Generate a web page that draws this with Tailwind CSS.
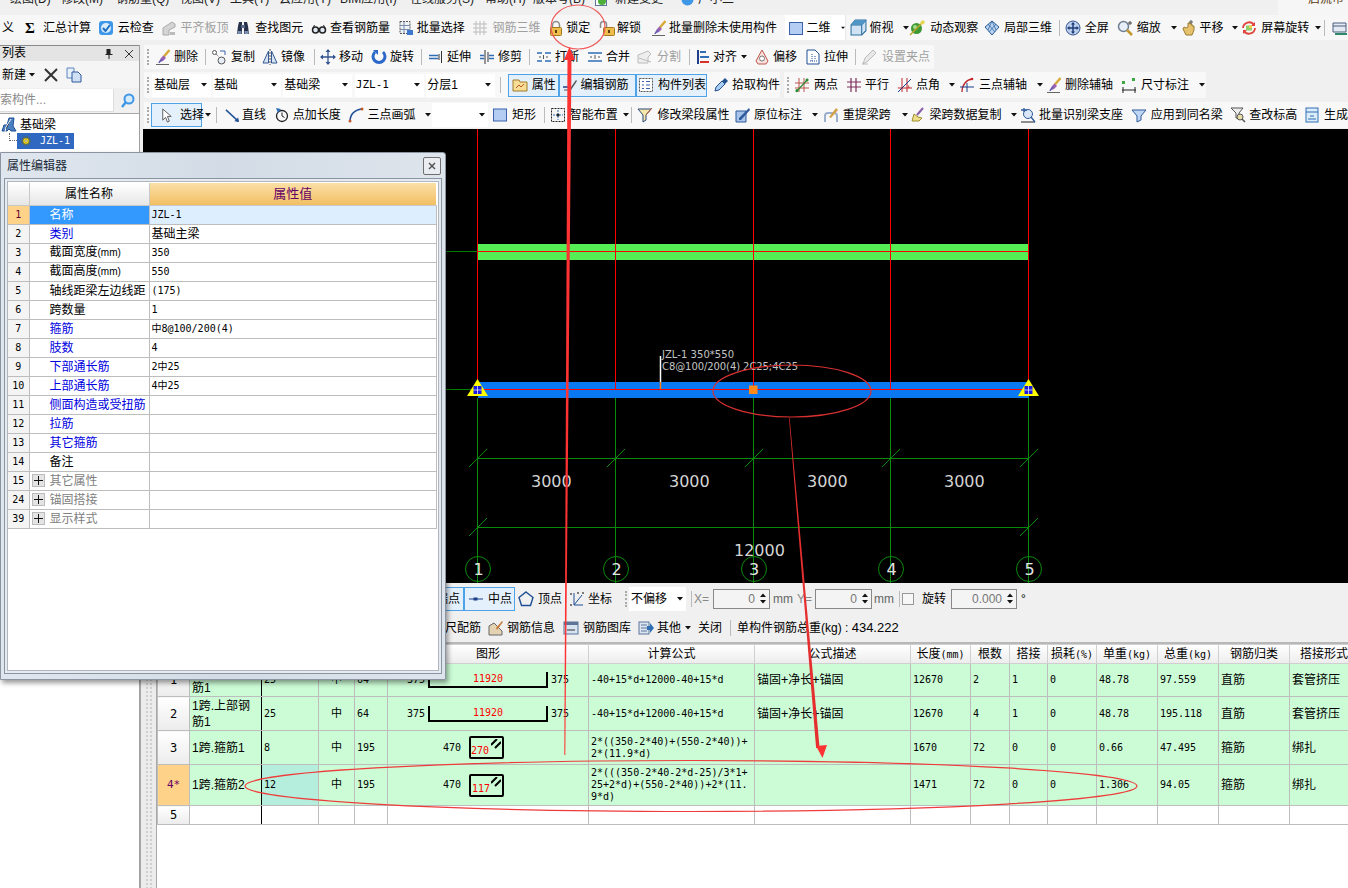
<!DOCTYPE html>
<html lang="zh-CN">
<head>
  <meta charset="UTF-8" />
  <title>钢筋算量</title>
  <script src="https://cdn.jsdelivr.net/npm/@tailwindcss/browser@4"></script>
</head>
<body class="relative w-[1348px] h-[888px] overflow-hidden bg-[#f0f0f0] text-xs leading-[14px] text-black font-['Liberation_Sans','Noto_Sans_CJK_SC',sans-serif]">

  <!-- icon set -->
  <svg class="absolute w-0 h-0">
    <symbol id="chk" viewBox="0 0 16 16"><rect x="1" y="1" width="14" height="14" rx="3" fill="#3f97e8"/><circle cx="8" cy="8" r="5" fill="#d8ecfb"/><path d="M5 8l2.500 3L12 5" fill="none" stroke="#1b6fc4" stroke-width="2"/></symbol>
    <symbol id="plate" viewBox="0 0 16 16"><path d="M2 15V8l9-6 3 2v3l-6 3v5z" fill="#d4d4d4" stroke="#aaa"/><path d="M9 15v-3h5v3z" fill="#bbb"/></symbol>
    <symbol id="bino" viewBox="0 0 16 16"><path d="M2 14l1-8 1-4h3v12zM9 14V2h3l1 4 1 8z" fill="#26324a"/><rect x="6" y="5" width="4" height="3" fill="#56688a"/><rect x="2.500" y="11" width="4" height="3" fill="#7d8fb0"/><rect x="9.500" y="11" width="4" height="3" fill="#7d8fb0"/></symbol>
    <symbol id="glass" viewBox="0 0 16 16"><circle cx="4.500" cy="10" r="3" fill="#dfe8f3" stroke="#222" stroke-width="1.500"/><circle cx="11.500" cy="10" r="3" fill="#dfe8f3" stroke="#222" stroke-width="1.500"/><path d="M7.500 9.500h1M1.500 9l2-4M14.500 9l-2-4" stroke="#222"/></symbol>
    <symbol id="batch" viewBox="0 0 16 16"><rect x="2" y="1.500" width="10" height="12" fill="#eef3fa" stroke="#555" stroke-dasharray="2 1"/><path d="M2 5.500h10M2 9.500h10M6 2v11" stroke="#7a8ba5"/><rect x="9" y="10" width="6" height="5" fill="#3e78cf"/></symbol>
    <symbol id="grid3d" viewBox="0 0 16 16"><path d="M1 4h14M1 8h14M1 12h14M4 1v14M8 1v14M12 1v14" stroke="#bdbdbd"/></symbol>
    <symbol id="lock" viewBox="0 0 16 16"><path d="M4.500 8V5a3.500 3.500 0 0 1 7 0v3" fill="none" stroke="#8b8b8b" stroke-width="1.500"/><rect x="2.500" y="7.500" width="11" height="8" rx="1" fill="#efbd4d" stroke="#a47a1c"/><rect x="7" y="10" width="2" height="3" fill="#5b3e10"/></symbol>
    <symbol id="unlock" viewBox="0 0 16 16"><path d="M1.500 8V4.500a3 3 0 0 1 6 0V8" fill="none" stroke="#8b8b8b" stroke-width="1.500"/><rect x="4.500" y="7.500" width="11" height="8" rx="1" fill="#efbd4d" stroke="#a47a1c"/><rect x="9" y="10" width="2" height="3" fill="#5b3e10"/></symbol>
    <symbol id="brush" viewBox="0 0 16 16"><path d="M14.500 1L8.500 8" stroke="#d8aa3a" stroke-width="2.500"/><path d="M8.500 6.500L6 9l-3 5 5-2 3-3z" fill="#9a62b5"/><path d="M7 10l-3 4" stroke="#3a62b0"/><path d="M1 15.500h13" stroke="#666"/></symbol>
    <symbol id="sq" viewBox="0 0 16 16"><rect x="1.500" y="2.500" width="13" height="12" fill="#b5cdf2" stroke="#3b62ad"/></symbol>
    <symbol id="box" viewBox="0 0 16 16"><path d="M1 5.500L5 1h10v10l-4 4H1z" fill="#cfe3f5" stroke="#2f6f9e"/><path d="M1 5.500h10V15M11 5.500L15 1" fill="none" stroke="#2f6f9e"/><path d="M1 5.500L5 1h10l-4 4.500z" fill="#4e95c8"/></symbol>
    <symbol id="orbit" viewBox="0 0 16 16"><circle cx="7.500" cy="8.500" r="5.500" fill="#3d9a35"/><circle cx="6" cy="7" r="2" fill="#a6dc8c"/><path d="M1 15L15 1" stroke="#bfa52e" stroke-width="1.500"/><circle cx="13.500" cy="2.500" r="2" fill="#e5d84a"/></symbol>
    <symbol id="cube3" viewBox="0 0 16 16"><path d="M8 1l7 6-7 8-7-8z" fill="#b8d2ee" stroke="#2a5f9e"/><path d="M4 4l7 8M8 1l4 9M12 4l-7 8M8 1L4 10" stroke="#2a5f9e" stroke-width=".7"/></symbol>
    <symbol id="full" viewBox="0 0 16 16"><circle cx="8" cy="8" r="7" fill="#bcd0ee" stroke="#31548f"/><path d="M8 3v10M3 8h10" stroke="#1f3e78" stroke-width="1.500"/><path d="M8 2l-2 2.500h4zM8 14l-2-2.500h4zM2 8l2.500-2v4zM14 8l-2.500-2v4z" fill="#1f3e78"/></symbol>
    <symbol id="zoom" viewBox="0 0 16 16"><circle cx="6.500" cy="6.500" r="5" fill="#e7f0fa" stroke="#6f7f90" stroke-width="1.500"/><path d="M10 10l5 5" stroke="#c0982e" stroke-width="2.500"/><path d="M13 1v4M11 3h4" stroke="#444"/></symbol>
    <symbol id="hand" viewBox="0 0 16 16"><path d="M3 9l3 6h6l2-5V6h-2V4h-2V3H8v4L6 8 4 7z" fill="#e6c26e" stroke="#9a7a2e"/><path d="M11 0v4M9 2h4" stroke="#555"/></symbol>
    <symbol id="rot" viewBox="0 0 16 16"><path d="M2 8a6 6 0 0 1 11-3M14 8a6 6 0 0 1-11 3" fill="none" stroke="#e0433c" stroke-width="1.800"/><path d="M14 2v4h-4zM2 14v-4h4z" fill="#e0433c"/><rect x="5" y="5.500" width="6" height="5" fill="#8fce6a"/><rect x="8" y="5.500" width="3" height="2.500" fill="#f0d04a"/></symbol>
    <symbol id="tree" viewBox="0 0 16 16"><path d="M1 14l2-6 3 0 2-7 5 0-1 8 3 5h-5l-2-2-2 2z" fill="#4a7fc0" stroke="#1e4f96"/><path d="M4 15l1-5 5-8" stroke="#fff"/></symbol>
    <symbol id="gear" viewBox="0 0 16 16"><circle cx="8" cy="8" r="5" fill="#f3dd24" stroke="#7a6a00"/><circle cx="8" cy="8" r="6.800" fill="none" stroke="#7a6a00" stroke-dasharray="1.500 1.500" stroke-width="1.500"/><circle cx="8" cy="8" r="2" fill="#fff" stroke="#7a6a00"/></symbol>
    <symbol id="copy" viewBox="0 0 16 16"><circle cx="3.500" cy="3.500" r="2" fill="#fff" stroke="#555"/><circle cx="10.500" cy="11.500" r="3.500" fill="#e8eef6" stroke="#555"/><path d="M5 5l3 3" stroke="#555" stroke-dasharray="1 1"/><path d="M9 2h5v4" fill="none" stroke="#3a62b0"/></symbol>
    <symbol id="mirror" viewBox="0 0 16 16"><path d="M6.500 2v12H1zM9.500 2v12H15z" fill="#d7e3f3" stroke="#335a92"/><path d="M8 0v16" stroke="#555" stroke-dasharray="2 1"/></symbol>
    <symbol id="move" viewBox="0 0 16 16"><path d="M8 1v14M1 8h14" stroke="#31548f" stroke-width="1.300"/><path d="M8 0l-2.500 3h5zM8 16l-2.500-3h5zM0 8l3-2.500v5zM16 8l-3-2.500v5z" fill="#31548f"/></symbol>
    <symbol id="rotate" viewBox="0 0 16 16"><path d="M4 3a6 6 0 1 0 8 0" fill="none" stroke="#2c68c8" stroke-width="3"/><path d="M2 1h5v5z" fill="#2c68c8"/></symbol>
    <symbol id="extend" viewBox="0 0 16 16"><path d="M13.500 2v12M11 5v6" stroke="#333"/><path d="M1 6.500h9M1 9.500h9" stroke="#2f6eb5" stroke-width="1.300"/></symbol>
    <symbol id="trim" viewBox="0 0 16 16"><path d="M6 1v14M9 3v10" stroke="#333"/><path d="M1 6.500h4M1 9.500h4M10 6.500h5M10 9.500h5" stroke="#2f6eb5" stroke-width="1.300"/></symbol>
    <symbol id="brk" viewBox="0 0 16 16"><path d="M1 4h5M9 4h6M1 12h5M9 12h6" stroke="#2f6eb5" stroke-width="1.600"/><path d="M7.500 6v4M4 7v2M11 7v2" stroke="#555"/></symbol>
    <symbol id="merge" viewBox="0 0 16 16"><path d="M1 4h14M1 12h14" stroke="#2f6eb5" stroke-width="1.600"/><path d="M8 6v4M4 7v2M12 7v2" stroke="#555"/></symbol>
    <symbol id="split" viewBox="0 0 16 16"><path d="M1 14V6l10-4 3 3-3 3v6z" fill="#eee" stroke="#bbb"/><path d="M2 9l12 4" stroke="#bbb"/></symbol>
    <symbol id="align" viewBox="0 0 16 16"><path d="M3 1v14" stroke="#1d3f8a" stroke-width="2"/><path d="M5 3h6M5 8h9" stroke="#2f6eb5" stroke-width="2"/><path d="M5 13h9" stroke="#d7332b" stroke-width="2"/></symbol>
    <symbol id="offset" viewBox="0 0 16 16"><path d="M8 1l6 11-2 3H4l-2-3z" fill="#f7e2dd" stroke="#c0554a"/><circle cx="8" cy="9.500" r="2.500" fill="#fff" stroke="#777"/></symbol>
    <symbol id="stretch" viewBox="0 0 16 16"><path d="M2 1h8l4 4v10H2z" fill="#fff" stroke="#1f4f96"/><path d="M7 5v7M5 12h7M10 7v3" stroke="#1f4f96" stroke-dasharray="1 1"/></symbol>
    <symbol id="grab" viewBox="0 0 16 16"><path d="M2 15l2-6 8-8 3 3-8 8z" fill="#e8e8e8" stroke="#bbb"/><path d="M1 15h6" stroke="#bbb"/></symbol>
    <symbol id="prop" viewBox="0 0 16 16"><path d="M1 3h6l1 2h7v9H1z" fill="#f7dd96" stroke="#a37b2b"/><path d="M4 11l3-3 2 2 3-3" stroke="#c1572b" fill="none"/></symbol>
    <symbol id="edit" viewBox="0 0 16 16"><path d="M1 10h8" stroke="#1d3f8a" stroke-width="1.500"/><path d="M7 13L14 3l1 1-6 9z" fill="#555"/><path d="M2 13h4" stroke="#555"/></symbol>
    <symbol id="list" viewBox="0 0 16 16"><rect x="1.500" y="1.500" width="13" height="13" fill="#fff" stroke="#555" stroke-dasharray="2 1"/><path d="M4 4.500h2M4 8h2M4 11.500h2M8 4.500h4M8 8h4M8 11.500h4" stroke="#3a62b0" stroke-width="1.200"/></symbol>
    <symbol id="pick" viewBox="0 0 16 16"><path d="M2 14l1-4 6-6 3 3-6 6z" fill="#a9cdf2" stroke="#24528f"/><path d="M9 4l3-3 3 3-3 3z" fill="#24528f"/></symbol>
    <symbol id="two" viewBox="0 0 16 16"><path d="M5 1v14M10 1v14M1 6h14M1 11h14" stroke="#b5453d" stroke-width=".9"/><path d="M2 15L14 2" stroke="#2c8a34" stroke-width="1.200"/><circle cx="3" cy="13.500" r="1.500" fill="#2c8a34"/><circle cx="13" cy="3" r="1.500" fill="#2c8a34"/></symbol>
    <symbol id="par" viewBox="0 0 16 16"><path d="M5 1v14M10 1v14M1 5h14M1 10h14" stroke="#7d2f5a" stroke-width="1.200"/></symbol>
    <symbol id="ang" viewBox="0 0 16 16"><path d="M5 1v14M10 1v14M1 11h14" stroke="#c1272d"/><path d="M1 15L14 2" stroke="#1d3f8a"/><path d="M12 11a3 3 0 0 0-1.500-3" stroke="#c1272d" fill="none"/></symbol>
    <symbol id="arc3" viewBox="0 0 16 16"><path d="M3 15C3 8 7 3 13 2" fill="none" stroke="#c1272d" stroke-width="1.300"/><path d="M1 10h14M8 6v9" stroke="#1d3f8a"/><circle cx="13" cy="2" r="1.300" fill="#c1272d"/></symbol>
    <symbol id="size" viewBox="0 0 16 16"><path d="M1 13h14M2 10v6M14 10v6" stroke="#222"/><rect x="1" y="4" width="3" height="3" fill="#3fa73f"/><rect x="11" y="1" width="3" height="3" fill="#3fa73f"/></symbol>
    <symbol id="cursor" viewBox="0 0 16 16"><path d="M4 1v12l3-3 2 5 2-1-2-5h4z" fill="#fff" stroke="#555"/></symbol>
    <symbol id="line" viewBox="0 0 16 16"><path d="M1 2l13 12" stroke="#1f4f96" stroke-width="1.500"/><path d="M15 15l-5-1 4-4z" fill="#1f4f96"/></symbol>
    <symbol id="ptlen" viewBox="0 0 16 16"><circle cx="8" cy="9" r="5.500" fill="none" stroke="#222" stroke-width="1.300"/><path d="M8 5.500V9l2.500 1.500" stroke="#222" fill="none"/><path d="M2 1l5 1-3 4z" fill="#2f6eb5"/></symbol>
    <symbol id="arc" viewBox="0 0 16 16"><path d="M2 15C2 8 6 3 14 2" fill="none" stroke="#1f4f96" stroke-width="1.500"/><circle cx="2" cy="14" r="1.500" fill="#c1572b"/><circle cx="14" cy="2" r="1.500" fill="#c1572b"/></symbol>
    <symbol id="rect" viewBox="0 0 16 16"><rect x="1.500" y="2" width="13" height="12" fill="#b5cdf2" stroke="#3b62ad"/></symbol>
    <symbol id="smart" viewBox="0 0 16 16"><rect x="1.500" y="1.500" width="13" height="13" fill="#f4f4f4" stroke="#222" stroke-dasharray="2 1"/><path d="M8 3v10M3 8h10" stroke="#2f6eb5" stroke-dasharray="2 1"/><circle cx="8" cy="8" r="1.500" fill="#222"/></symbol>
    <symbol id="modify" viewBox="0 0 16 16"><path d="M1 2h13l-5 6v5l-3 2V8z" fill="#f6e7ab" stroke="#29477c"/><path d="M9 8l6-7" stroke="#c1572b"/></symbol>
    <symbol id="orig" viewBox="0 0 16 16"><path d="M1 4h10v11H1z" fill="#a9c4ea" stroke="#2f5a9b"/><path d="M4 11L14 1l1 2L6 13H4z" fill="#2f5a9b"/></symbol>
    <symbol id="lift" viewBox="0 0 16 16"><path d="M2 15V9a3 3 0 0 1 3-3h6a3 3 0 0 1 3 3v6" fill="none" stroke="#9ab0cc" stroke-width="2"/><path d="M6 10l7-9 2 2-7 8z" fill="#d4a24a"/></symbol>
    <symbol id="broom" viewBox="0 0 16 16"><path d="M3 14l2-7 4 3 4 1-3 3z" fill="#f0df8a" stroke="#a18c2c"/><path d="M8 8l6-7" stroke="#8a5fa8" stroke-width="2"/></symbol>
    <symbol id="batchid" viewBox="0 0 16 16"><path d="M1 15h14" stroke="#222"/><circle cx="8" cy="7" r="4.500" fill="#d8e6f6" stroke="#2f5a9b"/><path d="M11 10l4 5M1 3h6M4 1v4" stroke="#2f5a9b" stroke-width="1.300"/></symbol>
    <symbol id="apply" viewBox="0 0 16 16"><path d="M1 3h14l-5 6v4l-4 2V9z" fill="#bcd6f3" stroke="#2f5a9b"/></symbol>
    <symbol id="checkh" viewBox="0 0 16 16"><path d="M1 1h12l-4 5v5H6V6z" fill="#eee" stroke="#555"/><circle cx="10" cy="10" r="3" fill="#e8dca8" stroke="#555"/><path d="M12 12l3 3" stroke="#555" stroke-width="1.500"/></symbol>
    <symbol id="gen" viewBox="0 0 16 16"><rect x="2" y="1" width="12" height="14" fill="#dcecfb" stroke="#2f6eb5"/><path d="M2 5h12M6 9h4M4 12h8" stroke="#2f6eb5"/></symbol>
    <symbol id="cog" viewBox="0 0 16 16"><path d="M1 3h13v9H1z" fill="#e4e9f2" stroke="#4a5f80"/><path d="M1 6h13" stroke="#4a5f80"/><path d="M3 13h12v2H3z" fill="#2c8a6a"/></symbol>
    <symbol id="mid" viewBox="0 0 16 16"><path d="M1 8h14" stroke="#1d3f8a"/><rect x="5.500" y="6.500" width="4" height="3" fill="#1d3f8a"/></symbol>
    <symbol id="vert" viewBox="0 0 16 16"><path d="M8 1l7 5.500-2.500 8h-9L1 6.500z" fill="none" stroke="#1f4f96" stroke-width="1.400"/></symbol>
    <symbol id="coord" viewBox="0 0 16 16"><path d="M5 2v12h9M5 14L13 4" stroke="#1f4f96" fill="none"/><circle cx="2" cy="3" r="1" fill="#555"/><circle cx="2" cy="14" r="1" fill="#555"/><circle cx="14" cy="2" r="1" fill="#555"/><circle cx="9" cy="2" r="1" fill="#555"/></symbol>
    <symbol id="info" viewBox="0 0 16 16"><path d="M1 15V6l5-3 8 8v4z" fill="#e4d3b3" stroke="#666"/><path d="M8 8l6-7 1 1-6 8z" fill="#c77a3a"/></symbol>
    <symbol id="lib" viewBox="0 0 16 16"><rect x="1" y="2" width="14" height="12" fill="#d8e3f1" stroke="#5b7498"/><rect x="1" y="2" width="14" height="3" fill="#5b7498"/><path d="M4 10h8" stroke="#333"/></symbol>
    <symbol id="other" viewBox="0 0 16 16"><rect x="1" y="2" width="10" height="12" fill="#dce6f2" stroke="#5b7498"/><path d="M3 5h6M3 8h6M3 11h6" stroke="#5b7498"/><path d="M9 6h3V3l4 5-4 5v-3H9z" fill="#2f6eb5"/></symbol>
    <symbol id="dn" viewBox="0 0 6 4"><path d="M0 0h6L3 3.500z" fill="#111"/></symbol>
  </svg>

  <!-- menu -->
  <div class="flex h-[15px] overflow-hidden whitespace-nowrap text-[#222]">
    <div class="-mt-[17px] flex items-center pl-[10px]">
      <span class="w-[51px]">绘图(D)</span><span class="w-[55px]">修改(M)</span><span class="w-[64px]">钢筋量(Q)</span><span class="w-[50px]">视图(V)</span><span class="w-[49px]">工具(T)</span><span class="w-[61px]">云应用(Y)</span><span class="w-[70px]">BIM应用(I)</span><span class="w-[75px]">在线服务(S)</span><span class="w-[48px]">帮助(H)</span><span class="w-[62px]">版本号(B)</span>
      <svg class="w-[14px] h-[14px] mr-[6px]" viewBox="0 0 14 14"><rect x=".5" y=".5" width="11" height="13" fill="#fff" stroke="#5b7498"/><circle cx="7" cy="9" r="4" fill="#4caf3a"/></svg><span class="w-[66px]">新建变更</span>
      <svg class="w-[13px] h-[13px] mr-[4px]" viewBox="0 0 13 13"><circle cx="6.500" cy="6.500" r="6" fill="#3f97e8"/></svg><span>广小二</span>
    </div>
    <div class="ml-auto w-[70px] pl-[30px] -mt-[17px] flex items-center bg-[#f6f6f6] text-[#5a3a10] overflow-hidden">启流市</div>
  </div>

  <!-- main toolbar -->
  <div class="flex items-center h-[25px] bg-[#f7f7f7] whitespace-nowrap">
    <span class="w-[25px] pl-[2px]">义</span>
    <div class="w-[73px] flex items-center gap-[8px]"><b class="w-[10px] text-[15px] font-['Liberation_Serif',serif]">Σ</b><span>汇总计算</span></div>
    <div class="w-[64px] flex items-center gap-[4px]"><svg class="w-4 h-4 shrink-0"><use href="#chk"/></svg><span>云检查</span></div>
    <div class="w-[74px] flex items-center gap-[3px] text-[#a0a0a0]"><svg class="w-4 h-4 shrink-0"><use href="#plate"/></svg><span>平齐板顶</span></div>
    <div class="w-[76px] flex items-center gap-[4px]"><svg class="w-4 h-4 shrink-0"><use href="#bino"/></svg><span>查找图元</span></div>
    <div class="w-[87px] flex items-center gap-[3px]"><svg class="w-4 h-4 shrink-0"><use href="#glass"/></svg><span>查看钢筋量</span></div>
    <div class="w-[74px] flex items-center gap-[3px]"><svg class="w-4 h-4 shrink-0"><use href="#batch"/></svg><span>批量选择</span></div>
    <div class="w-[77px] flex items-center gap-[5px] text-[#a0a0a0]"><svg class="w-4 h-4 shrink-0"><use href="#grid3d"/></svg><span>钢筋三维</span></div>
    <div class="w-[51px] flex items-center gap-[2px]"><svg class="w-4 h-4 shrink-0"><use href="#lock"/></svg><span>锁定</span></div>
    <div class="w-[52px] flex items-center gap-[2px]"><svg class="w-4 h-4 shrink-0"><use href="#unlock"/></svg><span>解锁</span></div>
    <div class="w-[134px] flex items-center gap-[2px]"><svg class="w-4 h-4 shrink-0"><use href="#brush"/></svg><span>批量删除未使用构件</span></div>
    <div class="w-[61px] h-full flex items-center gap-[3px] bg-white pl-[3px] border-r border-[#e8e8e8]"><svg class="w-4 h-4 shrink-0"><use href="#sq"/></svg><span>二维</span><svg class="w-[6px] h-[4px] ml-[7px]"><use href="#dn"/></svg></div>
    <div class="w-[64px] flex items-center gap-[3px] pl-[4px]"><svg class="w-[17px] h-[17px] shrink-0"><use href="#box"/></svg><span>俯视</span><svg class="w-[6px] h-[4px] ml-[6px]"><use href="#dn"/></svg></div>
    <div class="w-[75px] flex items-center gap-[5px]"><svg class="w-4 h-4 shrink-0"><use href="#orbit"/></svg><span>动态观察</span></div>
    <div class="w-[75px] flex items-center gap-[4px]"><svg class="w-4 h-4 shrink-0"><use href="#cube3"/></svg><span>局部三维</span></div>
    <div class="w-[6px] h-[16px] border-l border-[#bbb]"></div>
    <div class="w-[52px] flex items-center gap-[4px]"><svg class="w-4 h-4 shrink-0"><use href="#full"/></svg><span>全屏</span></div>
    <div class="w-[64px] flex items-center gap-[4px]"><svg class="w-4 h-4 shrink-0"><use href="#zoom"/></svg><span>缩放</span><svg class="w-[6px] h-[4px] ml-[6px]"><use href="#dn"/></svg></div>
    <div class="w-[61px] flex items-center gap-[3px]"><svg class="w-4 h-4 shrink-0"><use href="#hand"/></svg><span>平移</span><svg class="w-[6px] h-[4px] ml-[6px]"><use href="#dn"/></svg></div>
    <div class="w-[83px] flex items-center gap-[4px]"><svg class="w-4 h-4 shrink-0"><use href="#rot"/></svg><span>屏幕旋转</span><svg class="w-[6px] h-[4px] ml-[2px]"><use href="#dn"/></svg></div>
    <div class="w-[8px] h-[16px] border-l border-[#bbb]"></div>
    <svg class="w-4 h-4 shrink-0"><use href="#cog"/></svg>
  </div>

  <div class="flex h-[848px] mt-[5px]">
    <!-- component list panel -->
    <aside class="w-[140px] shrink-0 flex flex-col border-r border-[#a0a0a0] bg-white">
      <div class="flex items-center h-[16px] bg-[#e4e4e4] border-t border-[#8a8a8a] pl-[2px]">
        <span class="-mt-[2px]">列表</span>
        <svg class="ml-auto w-[9px] h-[11px] mr-[12px]" viewBox="0 0 9 11"><path d="M2.500 1h4v5h2v1h-3v4h-1V7h-3V6h1z" fill="#222"/></svg>
        <svg class="w-[8px] h-[8px] mr-[6px]" viewBox="0 0 8 8"><path d="M0 0l8 8M8 0L0 8" stroke="#333"/></svg>
      </div>
      <div class="flex items-center h-[27px] bg-[#f5f5f5] pl-[2px]">
        <span>新建</span><svg class="w-[6px] h-[4px] ml-[3px] mr-[9px]"><use href="#dn"/></svg>
        <svg class="w-[14px] h-[14px] mr-[8px]" viewBox="0 0 14 14"><path d="M1 1l12 12M13 1L1 13" stroke="#333" stroke-width="2"/></svg>
        <svg class="w-4 h-4" viewBox="0 0 16 16"><path d="M1 1h7v10H1z" fill="#e8f0fa" stroke="#5b86c0"/><path d="M6 5h6l3 3v7H6z" fill="#cfe0f5" stroke="#2f5a9b"/></svg>
      </div>
      <div class="flex items-center h-[25px] bg-[#f0f0f0]">
        <div class="w-[114px] h-[23px] bg-white border-r border-b border-[#ddd] flex items-center text-[#8a8a8a] overflow-hidden"><span>索构件...</span></div>
        <svg class="w-[15px] h-[15px] ml-[6px]" viewBox="0 0 15 15"><circle cx="9" cy="6" r="4.500" fill="#d7ecfb" stroke="#3f97e8" stroke-width="2"/><path d="M6 9l-4 5" stroke="#3f97e8" stroke-width="2.500"/></svg>
      </div>
      <div class="border-t border-[#a8a8a8] pt-[2px]">
        <div class="flex items-center h-[17px] pl-px gap-[3px]"><svg class="w-4 h-4"><use href="#tree"/></svg><span>基础梁</span></div>
        <div class="flex items-center h-[16px] pl-[9px]">
          <div class="w-[8px] h-[8px] -mt-[8px] border-l border-b border-dotted border-[#666]"></div>
          <div class="flex items-center w-[57px] h-[16px] bg-[#2f68c0] text-white pl-[4px] gap-[9px]"><svg class="w-[10px] h-[10px] shrink-0"><use href="#gear"/></svg><span class="font-['DejaVu_Sans_Mono',monospace] text-[10px]">JZL-1</span></div>
        </div>
      </div>
    </aside>

    <div class="flex-1 min-w-0 flex flex-col">
      <!-- edit toolbar -->
      <div class="ml-[4px] w-[790px] h-[24px] flex items-center bg-[#f8f8f8] rounded-[2px] whitespace-nowrap">
        <div class="ml-[3px] mr-[6px] w-[2px] h-[16px] border-l-2 border-dotted border-[#aaa]"></div>
        <div class="w-[50px] flex items-center gap-[3px]"><svg class="w-4 h-4 shrink-0"><use href="#brush"/></svg><span>删除</span></div>
        <div class="w-[6px] h-[16px] border-l border-[#bbb]"></div>
        <div class="w-[51px] flex items-center gap-[4px]"><svg class="w-4 h-4 shrink-0"><use href="#copy"/></svg><span>复制</span></div>
        <div class="w-[52px] flex items-center gap-[3px]"><svg class="w-4 h-4 shrink-0"><use href="#mirror"/></svg><span>镜像</span></div>
        <div class="w-[6px] h-[16px] border-l border-[#bbb]"></div>
        <div class="w-[51px] flex items-center gap-[3px]"><svg class="w-4 h-4 shrink-0"><use href="#move"/></svg><span>移动</span></div>
        <div class="w-[50px] flex items-center gap-[3px]"><svg class="w-4 h-4 shrink-0"><use href="#rotate"/></svg><span>旋转</span></div>
        <div class="w-[7px] h-[16px] border-l border-[#bbb]"></div>
        <div class="w-[51px] flex items-center gap-[3px]"><svg class="w-4 h-4 shrink-0"><use href="#extend"/></svg><span>延伸</span></div>
        <div class="w-[50px] flex items-center gap-[3px]"><svg class="w-4 h-4 shrink-0"><use href="#trim"/></svg><span>修剪</span></div>
        <div class="w-[7px] h-[16px] border-l border-[#bbb]"></div>
        <div class="w-[51px] flex items-center gap-[3px]"><svg class="w-4 h-4 shrink-0"><use href="#brk"/></svg><span>打断</span></div>
        <div class="w-[50px] flex items-center gap-[3px]"><svg class="w-4 h-4 shrink-0"><use href="#merge"/></svg><span>合并</span></div>
        <div class="w-[52px] flex items-center gap-[4px] text-[#a0a0a0]"><svg class="w-4 h-4 shrink-0"><use href="#split"/></svg><span>分割</span></div>
        <div class="w-[6px] h-[16px] border-l border-[#bbb]"></div>
        <div class="w-[59px] flex items-center gap-[2px]"><svg class="w-4 h-4 shrink-0"><use href="#align"/></svg><span>对齐</span><svg class="w-[6px] h-[4px] ml-[2px]"><use href="#dn"/></svg></div>
        <div class="w-[51px] flex items-center gap-[3px]"><svg class="w-4 h-4 shrink-0"><use href="#offset"/></svg><span>偏移</span></div>
        <div class="w-[50px] flex items-center gap-[3px]"><svg class="w-4 h-4 shrink-0"><use href="#stretch"/></svg><span>拉伸</span></div>
        <div class="w-[6px] h-[16px] border-l border-[#bbb]"></div>
        <div class="flex items-center gap-[5px] text-[#a0a0a0]"><svg class="w-4 h-4 shrink-0"><use href="#grab"/></svg><span>设置夹点</span></div>
      </div>

      <!-- floor / component selectors -->
      <div class="mt-[3px] h-[26px] flex items-center whitespace-nowrap">
        <div class="ml-[4px] w-[636px] h-full flex items-center bg-[#f8f8f8] rounded-[2px]">
          <div class="ml-[3px] mr-[3px] w-[2px] h-[16px] border-l-2 border-dotted border-[#aaa]"></div>
          <div class="w-[59px] h-[23px] ml-[0px] flex items-center justify-between bg-white pl-[2px] pr-[4px]"><span>基础层</span><svg class="w-[6px] h-[4px]"><use href="#dn"/></svg></div>
          <div class="w-[69px] h-[23px] ml-[2px] flex items-center justify-between bg-white pl-px pr-[4px]"><span>基础</span><svg class="w-[6px] h-[4px]"><use href="#dn"/></svg></div>
          <div class="w-[69px] h-[23px] ml-[2px] flex items-center justify-between bg-white pl-px pr-[4px]"><span>基础梁</span><svg class="w-[6px] h-[4px]"><use href="#dn"/></svg></div>
          <div class="w-[70px] h-[23px] ml-[3px] flex items-center justify-between bg-white pl-px pr-[4px]"><span class="font-['DejaVu_Sans_Mono',monospace] text-[11px]">JZL-1</span><svg class="w-[6px] h-[4px]"><use href="#dn"/></svg></div>
          <div class="w-[69px] h-[23px] ml-[2px] flex items-center justify-between bg-white pl-px pr-[4px]"><span>分层1</span><svg class="w-[6px] h-[4px]"><use href="#dn"/></svg></div>
          <div class="w-[8px] h-[16px] ml-[5px] border-l border-[#bbb]"></div>
          <div class="w-[51px] h-[23px] flex items-center gap-[4px] bg-[#e4f0fb] border border-[#4ea3e8] pl-[3px]"><svg class="w-4 h-4 shrink-0"><use href="#prop"/></svg><span>属性</span></div>
          <div class="w-[78px] h-[23px] flex items-center gap-[3px] bg-[#e4f0fb] border border-[#4ea3e8] pl-[2px]"><svg class="w-4 h-4 shrink-0"><use href="#edit"/></svg><span>编辑钢筋</span></div>
          <div class="w-[71px] h-[23px] flex items-center gap-[4px] bg-[#e4f0fb] border border-[#4ea3e8] pl-px"><svg class="w-4 h-4 shrink-0"><use href="#list"/></svg><span>构件列表</span></div>
          <div class="ml-[6px] flex items-center gap-[3px]"><svg class="w-4 h-4 shrink-0"><use href="#pick"/></svg><span>拾取构件</span></div>
        </div>
        <div class="ml-[4px] w-[422px] h-full flex items-center bg-[#f8f8f8] rounded-[2px]">
          <div class="ml-[3px] mr-[5px] w-[2px] h-[16px] border-l-2 border-dotted border-[#aaa]"></div>
          <div class="w-[52px] flex items-center gap-[4px]"><svg class="w-4 h-4 shrink-0"><use href="#two"/></svg><span>两点</span></div>
          <div class="w-[51px] flex items-center gap-[3px]"><svg class="w-4 h-4 shrink-0"><use href="#par"/></svg><span>平行</span></div>
          <div class="w-[62px] flex items-center gap-[3px]"><svg class="w-4 h-4 shrink-0"><use href="#ang"/></svg><span>点角</span><svg class="w-[6px] h-[4px] ml-[6px]"><use href="#dn"/></svg></div>
          <div class="w-[87px] flex items-center gap-[4px]"><svg class="w-4 h-4 shrink-0"><use href="#arc3"/></svg><span>三点辅轴</span><svg class="w-[6px] h-[4px] ml-[6px]"><use href="#dn"/></svg></div>
          <div class="w-[75px] flex items-center gap-[3px]"><svg class="w-4 h-4 shrink-0"><use href="#brush"/></svg><span>删除辅轴</span></div>
          <div class="flex items-center gap-[4px]"><svg class="w-4 h-4 shrink-0"><use href="#size"/></svg><span>尺寸标注</span><svg class="w-[6px] h-[4px] ml-[6px]"><use href="#dn"/></svg></div>
        </div>
      </div>

      <!-- drawing toolbar -->
      <div class="ml-[4px] mt-[4px] h-[26px] flex items-center bg-[#f8f8f8] whitespace-nowrap overflow-hidden">
        <div class="ml-[3px] mr-[2px] w-[2px] h-[16px] border-l-2 border-dotted border-[#aaa]"></div>
        <div class="w-[51px] h-[24px] flex items-center gap-[6px] bg-[#e4f0fb] border border-[#4ea3e8] pl-[7px]"><svg class="w-[15px] h-[15px] shrink-0"><use href="#cursor"/></svg><span>选择</span></div>
        <svg class="w-[6px] h-[4px] ml-[3px] mr-[5px]"><use href="#dn"/></svg>
        <div class="w-[9px] h-[16px] border-l border-[#bbb]"></div>
        <div class="w-[49px] flex items-center gap-[2px]"><svg class="w-[15px] h-[15px] shrink-0"><use href="#line"/></svg><span>直线</span></div>
        <div class="w-[75px] flex items-center gap-[3px]"><svg class="w-4 h-4 shrink-0"><use href="#ptlen"/></svg><span>点加长度</span></div>
        <div class="w-[84px] flex items-center gap-[3px]"><svg class="w-4 h-4 shrink-0"><use href="#arc"/></svg><span>三点画弧</span><svg class="w-[6px] h-[4px] ml-[6px]"><use href="#dn"/></svg></div>
        <div class="w-[56px] h-[24px] mr-[4px] flex items-center justify-end bg-white pr-[3px]"><svg class="w-[6px] h-[4px]"><use href="#dn"/></svg></div>
        <div class="w-[52px] flex items-center gap-[4px]"><svg class="w-4 h-4 shrink-0"><use href="#rect"/></svg><span>矩形</span></div>
        <div class="w-[6px] h-[16px] border-l border-[#bbb]"></div>
        <div class="w-[82px] flex items-center gap-[4px]"><svg class="w-4 h-4 shrink-0"><use href="#smart"/></svg><span>智能布置</span><svg class="w-[6px] h-[4px] ml-px"><use href="#dn"/></svg></div>
        <div class="w-[6px] h-[16px] border-l border-[#bbb]"></div>
        <div class="w-[98px] flex items-center gap-[4px]"><svg class="w-4 h-4 shrink-0"><use href="#modify"/></svg><span>修改梁段属性</span></div>
        <div class="w-[88px] flex items-center gap-[3px]"><svg class="w-4 h-4 shrink-0"><use href="#orig"/></svg><span>原位标注</span><svg class="w-[6px] h-[4px] ml-[7px]"><use href="#dn"/></svg></div>
        <div class="w-[87px] flex items-center gap-[4px]"><svg class="w-4 h-4 shrink-0"><use href="#lift"/></svg><span>重提梁跨</span><svg class="w-[6px] h-[4px] ml-[7px]"><use href="#dn"/></svg></div>
        <div class="w-[111px] flex items-center gap-[4px]"><svg class="w-4 h-4 shrink-0"><use href="#broom"/></svg><span>梁跨数据复制</span><svg class="w-[6px] h-[4px] ml-[6px]"><use href="#dn"/></svg></div>
        <div class="w-[111px] flex items-center gap-[3px]"><svg class="w-4 h-4 shrink-0"><use href="#batchid"/></svg><span>批量识别梁支座</span></div>
        <div class="w-[100px] flex items-center gap-[4px]"><svg class="w-4 h-4 shrink-0"><use href="#apply"/></svg><span>应用到同名梁</span></div>
        <div class="w-[74px] flex items-center gap-[3px]"><svg class="w-4 h-4 shrink-0"><use href="#checkh"/></svg><span>查改标高</span></div>
        <div class="flex items-center gap-[4px]"><svg class="w-4 h-4 shrink-0"><use href="#gen"/></svg><span>生成</span></div>
      </div>

      <!-- CAD drawing -->
      <svg class="block ml-[3px] mt-px w-[1205px] h-[454px] shrink-0 bg-black" viewBox="143 129 1205 454">
        <path d="M446 251.500h32M148 389.500h330" stroke="#008000"/>
        <rect x="478" y="244" width="551" height="16" fill="#55ee55"/>
        <rect x="478" y="382" width="551" height="16" fill="#0a78f0"/>
        <path d="M477.500 398V583M615.500 398V583M753.500 398V583M890.500 398V583M1028.500 398V583" stroke="#0a8a0a"/>
        <path d="M477.500 129V390M615.500 129V390M753.500 129V390M890.500 129V390M1028.500 129V390M478 251.500H1029M478 389.500H1029" stroke="#ff0000"/>
        <path d="M478 458.500H1029M478 527.500H1029M469 467l18-18M607 467l18-18M745 467l18-18M882 467l18-18M1020 467l18-18M469 536l18-18M1020 536l18-18" stroke="#0a8a0a"/>
        <g fill="#d4d4d4" font-family="DejaVu Sans, sans-serif" font-size="16">
          <text x="531" y="487">3000</text><text x="669" y="487">3000</text><text x="807" y="487">3000</text><text x="944" y="487">3000</text>
          <text x="734" y="556">12000</text>
        </g>
        <g fill="none" stroke="#0a8a0a">
          <circle cx="478" cy="569" r="12.500"/><circle cx="616" cy="569" r="12.500"/><circle cx="754" cy="569" r="12.500"/><circle cx="891" cy="569" r="12.500"/><circle cx="1029" cy="569" r="12.500"/>
        </g>
        <g fill="#e4e4e4" font-family="DejaVu Sans, sans-serif" font-size="16" text-anchor="middle">
          <text x="478.500" y="575">1</text><text x="616.500" y="575">2</text><text x="754" y="575">3</text><text x="891.500" y="575">4</text><text x="1029.500" y="575">5</text>
        </g>
        <path d="M477.500 379l10.500 17h-21z" fill="#ffff00"/><rect x="473.500" y="386" width="8" height="8" fill="#1a1ae0"/><path d="M477.500 386v8M473.500 390h8" stroke="#fff" stroke-width=".7"/>
        <path d="M1028.500 379l10.500 17h-21z" fill="#ffff00"/><rect x="1024.500" y="386" width="8" height="8" fill="#1a1ae0"/><path d="M1028.500 386v8M1024.500 390h8" stroke="#fff" stroke-width=".7"/>
        <path d="M660.500 356v26" stroke="#fff" stroke-width="1.500"/><path d="M660.500 382v7" stroke="#ff7a10" stroke-width="1.500"/>
        <rect x="749" y="385.500" width="8.500" height="8.500" fill="#ff8a1c"/>
        <g fill="#c4c4c4" font-family="DejaVu Sans, sans-serif" font-size="10">
          <text x="662" y="358" textLength="72">JZL-1 350*550</text>
          <text x="662" y="370" textLength="136">C8@100/200(4) 2C25;4C25</text>
        </g>
      </svg>

      <!-- snap toolbar -->
      <div class="h-[31px] shrink-0 flex items-center pl-[280px] whitespace-nowrap bg-[#f0f0f0]">
        <div class="w-[44px] h-[24px] flex items-center justify-end bg-[#e4f0fb] border border-[#4ea3e8] pr-[3px]"><span>端点</span></div>
        <div class="w-[51px] h-[24px] flex items-center gap-[4px] bg-[#e4f0fb] border border-[#4ea3e8] pl-[3px]"><svg class="w-4 h-4 shrink-0"><use href="#mid"/></svg><span>中点</span></div>
        <div class="w-[51px] ml-[3px] flex items-center gap-[4px]"><svg class="w-4 h-4 shrink-0"><use href="#vert"/></svg><span>顶点</span></div>
        <div class="w-[56px] flex items-center gap-[3px]"><svg class="w-4 h-4 shrink-0"><use href="#coord"/></svg><span>坐标</span></div>
        <div class="mr-[2px] w-[2px] h-[16px] border-l-2 border-dotted border-[#aaa]"></div>
        <div class="w-[57px] h-[24px] flex items-center justify-between bg-white pl-[2px] pr-[3px]"><span>不偏移</span><svg class="w-[6px] h-[4px]"><use href="#dn"/></svg></div>
        <div class="ml-[5px] w-[3px] h-[16px] border-l border-[#bbb]"></div>
        <span class="w-[19px] text-[#888]">X=</span>
        <div class="w-[57px] h-[20px] flex items-center justify-end border border-[#888] bg-[#f4f4f4] text-[#777] pr-[14px] relative"><span>0</span><span class="absolute right-[3px] top-[3px] flex flex-col gap-[3px]"><svg class="w-[6px] h-[4px] rotate-180"><use href="#dn"/></svg><svg class="w-[6px] h-[4px]"><use href="#dn"/></svg></span></div>
        <span class="w-[27px] pl-[3px] text-[#666]">mm</span>
        <span class="w-[18px] text-[#888]">Y=</span>
        <div class="w-[57px] h-[20px] flex items-center justify-end border border-[#888] bg-[#f4f4f4] text-[#777] pr-[14px] relative"><span>0</span><span class="absolute right-[3px] top-[3px] flex flex-col gap-[3px]"><svg class="w-[6px] h-[4px] rotate-180"><use href="#dn"/></svg><svg class="w-[6px] h-[4px]"><use href="#dn"/></svg></span></div>
        <span class="w-[27px] pl-[2px] text-[#666]">mm</span>
        <div class="w-[3px] h-[16px] border-l border-[#bbb]"></div>
        <div class="w-[12px] h-[12px] border border-[#999] bg-[#f7f7f7]"></div>
        <span class="ml-[8px] w-[29px]">旋转</span>
        <div class="w-[66px] h-[20px] flex items-center justify-end border border-[#888] bg-[#f4f4f4] text-[#777] pr-[14px] relative"><span>0.000</span><span class="absolute right-[3px] top-[3px] flex flex-col gap-[3px]"><svg class="w-[6px] h-[4px] rotate-180"><use href="#dn"/></svg><svg class="w-[6px] h-[4px]"><use href="#dn"/></svg></span></div>
        <span class="ml-[4px]">°</span>
      </div>

      <!-- rebar toolbar -->
      <div class="h-[28px] shrink-0 flex items-center pl-[293px] whitespace-nowrap bg-[#f0f0f0]">
        <span class="w-[55px] text-right pr-[13px]">按尺配筋</span>
        <div class="w-[75px] flex items-center gap-[3px]"><svg class="w-4 h-4 shrink-0"><use href="#info"/></svg><span>钢筋信息</span></div>
        <div class="w-[75px] flex items-center gap-[4px]"><svg class="w-4 h-4 shrink-0"><use href="#lib"/></svg><span>钢筋图库</span></div>
        <div class="w-[60px] flex items-center gap-[3px]"><svg class="w-4 h-4 shrink-0"><use href="#other"/></svg><span>其他</span><svg class="w-[6px] h-[4px] ml-px"><use href="#dn"/></svg></div>
        <span class="w-[32px]">关闭</span>
        <div class="w-[7px] h-[16px] border-l border-[#bbb]"></div>
        <span>单构件钢筋总重(kg) : <span class="text-[13px]">434.222</span></span>
      </div>

      <!-- rebar table -->
      <div class="flex-1 min-h-0 flex bg-white border-t-2 border-[#b8b8b8]">
        <div class="w-[17px] shrink-0 bg-[#ececec] border-x border-[#a8a8a8] flex justify-center"><div class="w-[6px] h-full border-x-2 border-dotted border-[#cfcfcf]"></div></div>
        <div class="flex-1 min-w-0 overflow-hidden">
          <table class="table-fixed w-[1213px] border-collapse text-[10px] leading-[12px] font-['DejaVu_Sans_Mono','Noto_Sans_CJK_SC',monospace] [&_td]:border [&_td]:border-[#bdbdbd] [&_td]:px-[2px] [&_td]:overflow-hidden [&_th]:border [&_th]:border-[#d0d0d0]">
            <colgroup>
              <col class="w-[32px]" /><col class="w-[72px]" /><col class="w-[57px]" /><col class="w-[36px]" /><col class="w-[33px]" /><col class="w-[201px]" /><col class="w-[166px]" /><col class="w-[156px]" /><col class="w-[60px]" /><col class="w-[39px]" /><col class="w-[38px]" /><col class="w-[49px]" /><col class="w-[61px]" /><col class="w-[61px]" /><col class="w-[71px]" /><col class="w-[81px]" />
            </colgroup>
            <thead>
              <tr class="h-[19px] bg-gradient-to-b from-white to-[#ececec] text-xs font-normal">
                <th class="font-normal"></th><th class="font-normal">筋号</th><th class="font-normal">直径</th><th class="font-normal">级别</th><th class="font-normal">图号</th><th class="font-normal">图形</th><th class="font-normal">计算公式</th><th class="font-normal">公式描述</th><th class="font-normal">长度<span class="text-[10px]">(mm)</span></th><th class="font-normal">根数</th><th class="font-normal">搭接</th><th class="font-normal">损耗<span class="text-[10px]">(%)</span></th><th class="font-normal">单重<span class="text-[10px]">(kg)</span></th><th class="font-normal">总重<span class="text-[10px]">(kg)</span></th><th class="font-normal">钢筋归类</th><th class="font-normal text-left pl-[10px] whitespace-nowrap">搭接形式</th>
              </tr>
            </thead>
            <tbody class="bg-[#ccfcd6]">
              <tr class="h-[33px]">
                <td class="text-center bg-gradient-to-b from-white to-[#ececec] text-xs">1</td>
                <td class="text-xs !border-r-black font-['Liberation_Sans','Noto_Sans_CJK_SC',sans-serif]">1跨.下部钢<br />筋1</td><td>25</td><td class="text-center text-[11px]">中</td><td>64</td>
                <td><div class="flex items-center justify-center gap-[3px]"><span>375</span><div class="w-[120px] h-[16px] border-2 border-t-0 border-black text-center text-[#ff0000] pt-px">11920</div><span>375</span></div></td>
                <td>-40+15*d+12000-40+15*d</td><td class="text-xs">锚固+净长+锚固</td><td>12670</td><td>2</td><td>1</td><td>0</td><td>48.78</td><td>97.559</td><td class="text-xs">直筋</td><td class="text-xs">套管挤压</td>
              </tr>
              <tr class="h-[34px]">
                <td class="text-center bg-gradient-to-b from-white to-[#ececec] text-xs">2</td>
                <td class="text-xs !border-r-black font-['Liberation_Sans','Noto_Sans_CJK_SC',sans-serif]">1跨.上部钢<br />筋1</td><td>25</td><td class="text-center text-[11px]">中</td><td>64</td>
                <td><div class="flex items-center justify-center gap-[3px]"><span>375</span><div class="w-[120px] h-[16px] border-2 border-t-0 border-black text-center text-[#ff0000] pt-px">11920</div><span>375</span></div></td>
                <td>-40+15*d+12000-40+15*d</td><td class="text-xs">锚固+净长+锚固</td><td>12670</td><td>4</td><td>1</td><td>0</td><td>48.78</td><td>195.118</td><td class="text-xs">直筋</td><td class="text-xs">套管挤压</td>
              </tr>
              <tr class="h-[34px]">
                <td class="text-center bg-gradient-to-b from-white to-[#ececec] text-xs">3</td>
                <td class="text-xs !border-r-black font-['Liberation_Sans','Noto_Sans_CJK_SC',sans-serif]">1跨.箍筋1</td><td>8</td><td class="text-center text-[11px]">中</td><td>195</td>
                <td><div class="flex items-center pl-[53px] gap-[8px]"><span>470</span><div class="relative w-[35px] h-[23px] border-2 border-black rounded-[2px] text-[#ff0000]"><svg class="absolute right-px top-px w-[10px] h-[10px]" viewBox="0 0 10 10"><path d="M0 6L6 0M4 9L10 3" stroke="#000" stroke-width="2"/></svg><span class="absolute left-0 bottom-0">270</span></div></div></td>
                <td>2*((350-2*40)+(550-2*40))+<br />2*(11.9*d)</td><td></td><td>1670</td><td>72</td><td>0</td><td>0</td><td>0.66</td><td>47.495</td><td class="text-xs">箍筋</td><td class="text-xs">绑扎</td>
              </tr>
              <tr class="h-[41px]">
                <td class="text-center bg-[#ffd28a] text-[#660066] text-[11px]">4*</td>
                <td class="text-xs !border-r-black font-['Liberation_Sans','Noto_Sans_CJK_SC',sans-serif]">1跨.箍筋2</td><td class="bg-[#b5eedc]">12</td><td class="text-center text-[11px]">中</td><td>195</td>
                <td><div class="flex items-center pl-[53px] gap-[8px]"><span>470</span><div class="relative w-[35px] h-[23px] border-2 border-black rounded-[2px] text-[#ff0000]"><svg class="absolute right-px top-px w-[10px] h-[10px]" viewBox="0 0 10 10"><path d="M0 6L6 0M4 9L10 3" stroke="#000" stroke-width="2"/></svg><span class="absolute left-px bottom-0">117</span></div></div></td>
                <td>2*(((350-2*40-2*d-25)/3*1+<br />25+2*d)+(550-2*40))+2*(11.<br />9*d)</td><td></td><td>1471</td><td>72</td><td>0</td><td>0</td><td>1.306</td><td>94.05</td><td class="text-xs">箍筋</td><td class="text-xs">绑扎</td>
              </tr>
              <tr class="h-[19px] bg-white">
                <td class="text-center bg-gradient-to-b from-white to-[#ececec] text-xs">5</td>
                <td class="!border-r-black"></td><td></td><td></td><td></td><td></td><td></td><td></td><td></td><td></td><td></td><td></td><td></td><td></td><td></td><td></td>
              </tr>
            </tbody>
          </table>
        </div>
      </div>
    </div>
  </div>

  <!-- property editor window -->
  <section class="absolute left-0 top-[152px] w-[446px] h-[528px] flex flex-col bg-gradient-to-r from-[#dfe6ee] via-[#d3dce6] to-[#dde4ec] border border-[#8b95a2] rounded-tr-[3px] shadow-[2px_3px_5px_rgba(0,0,0,0.4)] px-[3px] pb-[5px]">
    <header class="h-[25px] shrink-0 flex items-center justify-between pl-[3px] pr-px text-[#1b2a3a]">
      <span>属性编辑器</span>
      <div class="w-[18px] h-[18px] flex items-center justify-center border border-[#6f6f6f] rounded-[2px] bg-[#e9edf1]"><svg class="w-[8px] h-[8px]" viewBox="0 0 8 8"><path d="M1 1l6 6M7 1L1 7" stroke="#555" stroke-width="1.500"/></svg></div>
    </header>
    <div class="flex-1 border border-[#8b95a2] bg-[#e6ebf1] p-[2px]">
      <div class="h-full bg-white border border-[#b0b6bd] pt-px">
        <table class="table-fixed w-[428px] border-collapse text-xs leading-[14px] [&_td]:border-r [&_td]:border-b [&_td]:border-[#bdbdbd] [&_td]:overflow-hidden [&_td]:whitespace-nowrap [&_tr]:h-[19px]">
          <colgroup><col class="w-[21px]" /><col class="w-[120px]" /><col class="w-[287px]" /></colgroup>
          <thead>
            <tr class="!h-[22px]">
              <th class="font-normal border-r border-b border-[#c8c8c8] bg-gradient-to-b from-white to-[#e6e6e6]"></th>
              <th class="font-normal border-r border-b border-[#c8c8c8] bg-gradient-to-b from-white to-[#e6e6e6]">属性名称</th>
              <th class="font-normal border-b border-[#c8c8c8] bg-gradient-to-b from-[#fadfa6] to-[#f2bf62] text-[#660066] text-[13px]">属性值</th>
            </tr>
          </thead>
          <tbody class="[&_td:nth-child(1)]:text-center [&_td:nth-child(1)]:bg-[#f4f4f4] [&_td:nth-child(1)]:font-['DejaVu_Sans_Mono',monospace] [&_td:nth-child(1)]:text-[10px] [&_td:nth-child(3)]:pl-[2px] [&_td:nth-child(3)]:font-['DejaVu_Sans_Mono','Noto_Sans_CJK_SC',monospace] [&_td:nth-child(3)]:text-[10px]">
            <tr><td class="!bg-[#ffd28a] text-[#660033]">1</td><td class="bg-[#3399ff] text-white pl-[20px]">名称</td><td class="bg-[#ddeeff]">JZL-1</td></tr>
            <tr><td>2</td><td class="pl-[20px] text-[#0000e0]">类别</td><td class="!text-xs">基础主梁</td></tr>
            <tr><td>3</td><td class="pl-[20px]">截面宽度<span class="text-[10px]">(mm)</span></td><td>350</td></tr>
            <tr><td>4</td><td class="pl-[20px]">截面高度<span class="text-[10px]">(mm)</span></td><td>550</td></tr>
            <tr><td>5</td><td class="pl-[20px]">轴线距梁左边线距</td><td>(175)</td></tr>
            <tr><td>6</td><td class="pl-[20px]">跨数量</td><td>1</td></tr>
            <tr><td>7</td><td class="pl-[20px] text-[#0000e0]">箍筋</td><td>中8@100/200(4)</td></tr>
            <tr><td>8</td><td class="pl-[20px] text-[#0000e0]">肢数</td><td>4</td></tr>
            <tr><td>9</td><td class="pl-[20px] text-[#0000e0]">下部通长筋</td><td>2中25</td></tr>
            <tr><td>10</td><td class="pl-[20px] text-[#0000e0]">上部通长筋</td><td>4中25</td></tr>
            <tr><td>11</td><td class="pl-[20px] text-[#0000e0]">侧面构造或受扭筋</td><td></td></tr>
            <tr><td>12</td><td class="pl-[20px] text-[#0000e0]">拉筋</td><td></td></tr>
            <tr><td>13</td><td class="pl-[20px] text-[#0000e0]">其它箍筋</td><td></td></tr>
            <tr><td>14</td><td class="pl-[20px]">备注</td><td></td></tr>
            <tr><td>15</td><td class="text-[#808080]"><div class="flex items-center gap-[5px] pl-[2px]"><div class="w-[13px] h-[13px] border border-[#bbb] bg-[#e4e4e4] flex items-center justify-center"><svg class="w-[9px] h-[9px]" viewBox="0 0 9 9"><path d="M4.500 0v9M0 4.500h9" stroke="#111"/></svg></div><span>其它属性</span></div></td><td></td></tr>
            <tr><td>24</td><td class="text-[#808080]"><div class="flex items-center gap-[5px] pl-[2px]"><div class="w-[13px] h-[13px] border border-[#bbb] bg-[#e4e4e4] flex items-center justify-center"><svg class="w-[9px] h-[9px]" viewBox="0 0 9 9"><path d="M4.500 0v9M0 4.500h9" stroke="#111"/></svg></div><span>锚固搭接</span></div></td><td></td></tr>
            <tr><td>39</td><td class="text-[#808080]"><div class="flex items-center gap-[5px] pl-[2px]"><div class="w-[13px] h-[13px] border border-[#bbb] bg-[#e4e4e4] flex items-center justify-center"><svg class="w-[9px] h-[9px]" viewBox="0 0 9 9"><path d="M4.500 0v9M0 4.500h9" stroke="#111"/></svg></div><span>显示样式</span></div></td><td></td></tr>
          </tbody>
        </table>
      </div>
    </div>
  </section>

  <!-- red hand-drawn annotations over the screenshot -->
  <svg class="absolute left-0 top-0 w-[1348px] h-[888px] pointer-events-none" viewBox="0 0 1348 888">
    <ellipse cx="578" cy="27" rx="27" ry="22" fill="none" stroke="#ee5a5a" stroke-width="1.200"/>
    <path d="M569.500 47l-5.500 13h11z" fill="#f33"/>
    <path d="M567.500 58h4l-6.200 697h-1z" fill="#f33"/>
    <ellipse cx="792" cy="391" rx="79" ry="26" fill="none" stroke="#d83030" stroke-width="1.200"/>
    <path d="M789 418l.600 0 30 330 -3.500 0z" fill="#e52e2e"/>
    <path d="M816 746l11 -1 -4.500 13z" fill="#f33"/>
    <ellipse cx="691" cy="786" rx="446" ry="25.500" fill="none" stroke="#ee3c3c" stroke-width="1.200"/>
  </svg>
</body>
</html>
